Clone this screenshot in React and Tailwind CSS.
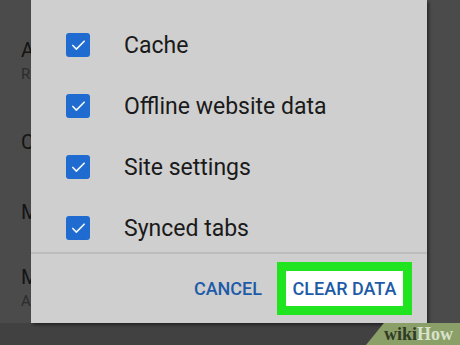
import { Check } from "lucide-react";

const OPTIONS = ["Cache", "Offline website data", "Site settings", "Synced tabs"];

// settings list that sits behind the dialog, only its first letters show
const BACK_ITEMS = [
  { title: "Accessibility", sub: "Reduce motion", top: "mt-[40px]" },
  { title: "Content settings", top: "mt-[50px]" },
  { title: "Manage storage", top: "mt-[50px]" },
  { title: "Merchant data", sub: "All sites", top: "mt-[45px]" },
];

function Checkbox() {
  return (
    <span className="flex h-[24px] w-[24px] shrink-0 items-center justify-center rounded-[3px] bg-[#1f6bd0]">
      <Check size={17} strokeWidth={2.4} className="text-[#eef4ff]" />
    </span>
  );
}

export default function App() {
  return (
    <div
      className="relative h-[345px] w-[460px] overflow-hidden bg-[#4b4b4b]"
      style={{ fontFamily: "Roboto, 'Liberation Sans', sans-serif" }}
    >
      {/* page behind */}
      <div className="flex w-[31px] flex-col overflow-hidden whitespace-nowrap pl-[21px]">
        {BACK_ITEMS.map((it) => (
          <div key={it.title} className={`${it.top} leading-none`}>
            <div className="text-[20px] text-[#141414]">{it.title}</div>
            {it.sub && (
              <div className="mt-[7px] text-[15px] text-[#2c2c2c]">{it.sub}</div>
            )}
          </div>
        ))}
      </div>
      <div className="absolute bottom-0 left-0 h-[22px] w-full bg-[#414141]" />

      {/* dialog */}
      <div className="absolute left-[31px] top-0 flex h-[323px] w-[396px] flex-col bg-[#cfcfcf] shadow-[2px_2px_3px_rgba(0,0,0,0.45)]">
        <div className="flex flex-col gap-[37px] pl-[35px] pt-[33px]">
          {OPTIONS.map((o) => (
            <div key={o} className="flex h-[24px] items-center gap-[34px]">
              <Checkbox />
              <span className="text-[23px] leading-none text-[#1a1a1a]">{o}</span>
            </div>
          ))}
        </div>
        <div className="mt-[12px] h-[2px] bg-[#bcbcbc]" />
        <div className="mt-[8px] flex items-center justify-end gap-[15px] pr-[15px]">
          <span className="text-[18px] font-medium text-[#1d5ba8]">CANCEL</span>
          <div className="flex h-[53px] w-[135px] items-center justify-center border-[9px] border-[#20e41f] bg-white">
            <span className="text-[18px] font-medium text-[#1d5ba8]">CLEAR DATA</span>
          </div>
        </div>
      </div>

      {/* watermark */}
      <div className="absolute bottom-0 right-0 flex h-[22px] w-[94px] items-center justify-end bg-[#8b9f69] pr-[7px] [clip-path:polygon(19%_0,100%_0,100%_100%,0_100%)]">
        <span
          className="text-[18px] font-bold leading-none"
          style={{ fontFamily: "'Liberation Serif', serif" }}
        >
          <span className="text-[#2f3b25]">wiki</span>
          <span className="text-[#d9e2ca]">How</span>
        </span>
      </div>
    </div>
  );
}
